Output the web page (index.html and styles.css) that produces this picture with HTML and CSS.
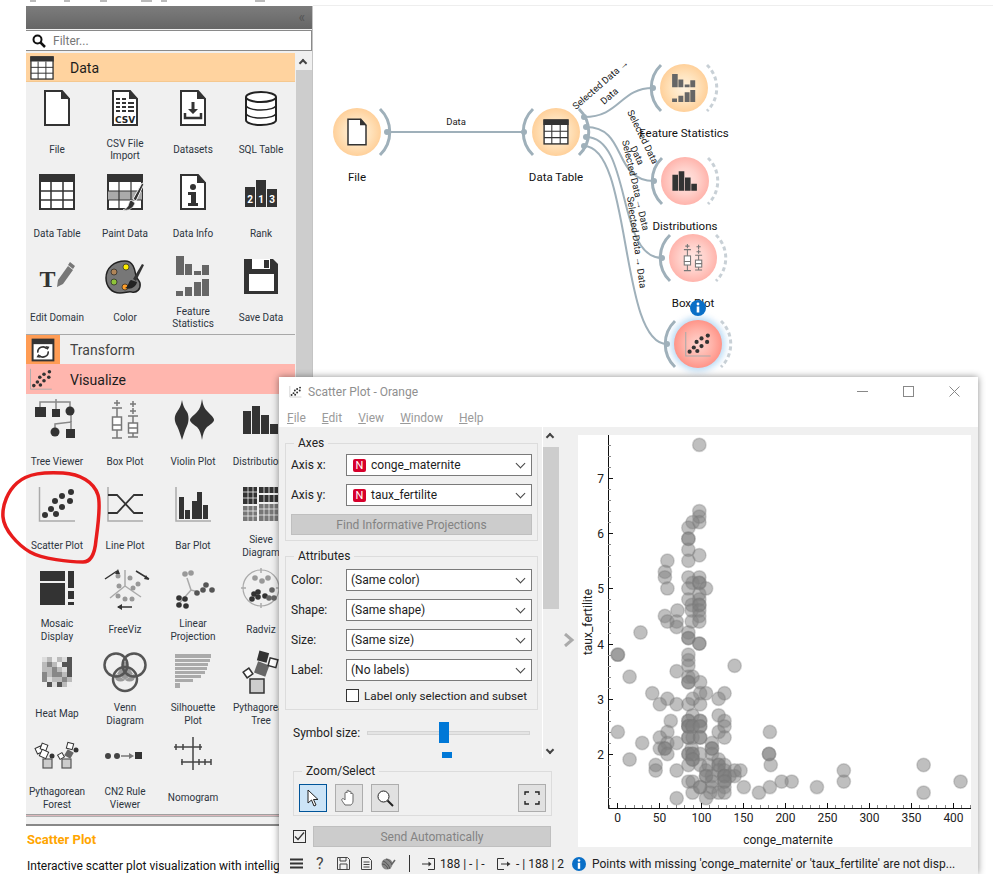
FILE: index.html
```html
<!DOCTYPE html>
<html lang="en">
<head>
    <meta charset="UTF-8">
    <title>Scatter Plot - Orange</title>
    <link rel="stylesheet" href="styles.css">
</head>
<body>

    <!-- Icon library -->
    <svg class="defs" width="0" height="0">
        <defs>
            <symbol id="i-file" viewBox="0 0 40 40" overflow="visible"><path d="M8 3h17l7 8v26H8z" fill="#fff" stroke="#333" stroke-width="2"/><path d="M24 2l9 9h-9z" fill="#333"/></symbol>
            <symbol id="i-csv" viewBox="0 0 40 40" overflow="visible"><path d="M8 3h17l7 8v26H8z" fill="#fff" stroke="#333" stroke-width="2"/><path d="M24 2l9 9h-9z" fill="#333"/><path d="M11 10h4v2h-4zM17 10h4v2h-4zM11 14h4v2h-4zM17 14h4v2h-4zM23 14h6v2h-6zM11 18h4v2h-4zM17 18h4v2h-4zM23 18h6v2h-6zM11 22h4v2h-4zM17 22h4v2h-4zM23 22h6v2h-6z" fill="#333"/><text x="20" y="35" class="ico-csv">CSV</text></symbol>
            <symbol id="i-datasets" viewBox="0 0 40 40" overflow="visible"><path d="M8 3h17l7 8v26H8z" fill="#fff" stroke="#333" stroke-width="2"/><path d="M24 2l9 9h-9z" fill="#333"/><path d="M18.500 14h3v7h3.500l-5 5-5-5h3.500z" fill="#333"/><path d="M12 25v5h16v-5" fill="none" stroke="#333" stroke-width="2.500"/></symbol>
            <symbol id="i-sql" viewBox="0 0 40 40" overflow="visible"><path d="M5 9v23c0 3 7 5 15 5s15-2 15-5V9" fill="#fff" stroke="#222" stroke-width="2"/><ellipse cx="20" cy="9" rx="15" ry="5" fill="#fff" stroke="#222" stroke-width="2"/><path d="M5 17c0 3 7 5 15 5s15-2 15-5M5 25c0 3 7 5 15 5s15-2 15-5" fill="none" stroke="#222" stroke-width="1.500"/></symbol>
            <symbol id="i-table" viewBox="0 0 40 40" overflow="visible"><rect x="3" y="3" width="34" height="34" fill="#fff" stroke="#333" stroke-width="2"/><rect x="2" y="2" width="36" height="8" fill="#333"/><path d="M14 10v27M26 10v27M3 19h34M3 28h34" stroke="#333" stroke-width="1.500"/></symbol>
            <symbol id="i-paint" viewBox="0 0 40 40" overflow="visible"><rect x="3" y="3" width="34" height="34" fill="#fff" stroke="#333" stroke-width="2"/><rect x="2" y="2" width="36" height="8" fill="#333"/><rect x="3" y="19" width="34" height="9" fill="#aaa"/><path d="M14 10v27M26 10v27M3 19h34M3 28h34" stroke="#333" stroke-width="1.200"/><path d="M37 11l-9 16 3 2 8-17z" fill="#333" stroke="#f0f0f0"/><path d="M26 28c-2 1-2 4-3 6-1 2-3 3-5 4 5 1 10-1 12-7z" fill="#333" stroke="#f0f0f0" stroke-width=".8"/></symbol>
            <symbol id="i-info" viewBox="0 0 40 40" overflow="visible"><path d="M8 3h17l7 8v26H8z" fill="#fff" stroke="#333" stroke-width="2"/><path d="M24 2l9 9h-9z" fill="#333"/><circle cx="20" cy="15" r="3" fill="#333"/><path d="M15 20h8v11h2v3H15v-3h3v-8h-3z" fill="#333"/></symbol>
            <symbol id="i-rank" viewBox="0 0 40 40" overflow="visible"><path d="M4 15h10v20H4zM15 8h10v27H15zM26 17h10v18H26z" fill="#333"/><text x="9" y="31" class="ico-rank">2</text><text x="20" y="31" class="ico-rank">1</text><text x="31" y="31" class="ico-rank">3</text></symbol>
            <symbol id="i-edit" viewBox="0 0 40 40" overflow="visible"><text x="10.500" y="31" class="ico-t">T</text><path d="M31 10l5 4-10 14-6 3 1-7z" fill="#777"/><path d="M33 6l5 4-2 3-5-4z" fill="#777"/></symbol>
            <symbol id="i-palette" viewBox="0 0 40 40" overflow="visible"><path d="M20 5C9 5 1 12 1 22c0 9 6 15 14 15 6 0 8-2 12-1 5 1 9-3 8-9-1-3-3-4-4-7-1-5-2-15-11-15z" fill="#777" stroke="#222" stroke-width="1.500"/><circle cx="21" cy="11" r="3" fill="#ffee00" stroke="#222" stroke-width=".7"/><circle cx="9" cy="16" r="3" fill="#b08558" stroke="#222" stroke-width=".7"/><circle cx="9" cy="26" r="3" fill="#8fc43a" stroke="#222" stroke-width=".7"/><circle cx="20" cy="31" r="3" fill="#ff9f2a" stroke="#222" stroke-width=".7"/><path d="M37 8l-9 15 3 2 8-16z" fill="#333"/><path d="M26 24c-3 2-2 6-6 8 6 2 11-1 12-6z" fill="#222"/></symbol>
            <symbol id="i-fstats" viewBox="0 0 40 40" overflow="visible"><path d="M3 0h8v19H3zM12 8h7v11h-7zM21 15h7v4h-7zM29 9h7v10h-7zM3 35h7v5H3zM12 31h7v9h-7zM21 26h7v14h-7zM29 23h7v17h-7z" fill="#666"/></symbol>
            <symbol id="i-save" viewBox="0 0 40 40" overflow="visible"><path d="M3 3h29l5 5v30H3z" fill="#333"/><rect x="11" y="3" width="18" height="10" fill="#fff"/><rect x="23" y="4" width="5" height="8" fill="#333"/><rect x="8" y="18" width="25" height="17" fill="#fff"/></symbol>
            <symbol id="i-tree" viewBox="0 0 40 40" overflow="visible"><path d="M3 9V2h30v9M19-1v10M18 31v-7l16-2v8M34 11v11" fill="none" stroke="#888" stroke-width="1.500"/><path d="M-2 7h11v10H-2zM15 9h8v8h-8zM29 29h9v9h-9z" fill="#333"/><circle cx="33" cy="11" r="4.500" fill="#333"/><circle cx="18" cy="32" r="4.500" fill="#333"/></symbol>
            <symbol id="i-box" viewBox="0 0 40 40" overflow="visible"><g fill="none" stroke="#777" stroke-width="1.500"><path d="M12 0v6M9 3h6M7 8h10M12 8v9M7 38h10M12 30v8M28 1v6M25 4h6M28 8v6M25 11h6M23 16h10M28 16v7M23 37h10M28 33v4"/><rect x="7.500" y="17" width="9" height="13" fill="#fff"/><rect x="23.500" y="23" width="9" height="10" fill="#fff"/><path d="M7 25h10M23 28h10"/></g></symbol>
            <symbol id="i-violin" viewBox="0 0 40 40" overflow="visible"><path d="M9 0c1 6 3 9 5 12 2 3 2 10 0 14-2 4-3 8-5 14-2-6-3-10-5-14-3-5-3-10 0-14 2-3 4-6 5-12z" fill="#333"/><path d="M29-1c1 6 2 9 6 13 4 4 6 6 6 8s-3 4-7 7c-3 3-4 7-5 13-1-6-2-10-5-13-4-3-7-5-7-7s3-4 7-8c3-3 4-7 5-13z" fill="#333"/></symbol>
            <symbol id="i-dist" viewBox="0 0 40 40" overflow="visible"><path d="M2 11h8v23H2zM11 6h8v28h-8zM20 15h8v19h-8zM29 24h8v10h-8z" fill="#333"/></symbol>
            <symbol id="i-scatter" viewBox="0 0 40 40" overflow="visible"><path d="M2.500 3v34H38" fill="none" stroke="#aaa" stroke-width="1.500"/><g fill="#333"><circle cx="34" cy="8" r="3"/><circle cx="25" cy="12" r="3"/><circle cx="33" cy="17" r="3"/><circle cx="18" cy="17" r="3"/><circle cx="25" cy="23" r="3"/><circle cx="14" cy="25" r="3"/><circle cx="8" cy="31" r="3"/><circle cx="19" cy="30" r="3"/></g></symbol>
            <symbol id="i-line" viewBox="0 0 40 40" overflow="visible"><path d="M3 3v34h35" fill="none" stroke="#aaa" stroke-width="1.500"/><path d="M3 11h9l17 18h9M3 29h9l17-18h9" fill="none" stroke="#333" stroke-width="1.800"/></symbol>
            <symbol id="i-bar" viewBox="0 0 40 40" overflow="visible"><path d="M3 3v34h35" fill="none" stroke="#aaa" stroke-width="1.500"/><path d="M6 13h5v22H6zM12 26h5v9h-5zM19 17h5v18h-5zM24 8h5v27h-5zM30 21h5v14h-5z" fill="#333"/></symbol>
            <symbol id="i-sieve" viewBox="0 0 40 40" overflow="visible"><path d="M2 3h14v17H2zM18 3h19v6H18zM18 11h19v7H18z" fill="#333"/><path d="M2 22h14v15H2zM18 20h19v17H18z" fill="#777"/><path d="M7 3v34M12 3v34M2 8h14M2 14h14M2 27h14M2 32h14M23 3v34M28 3v34M33 3v34M18 25h19M18 31h19" stroke="#f0f0f0" stroke-width=".8"/></symbol>
            <symbol id="i-mosaic" viewBox="0 0 40 40" overflow="visible"><path d="M3 3h25v10H3zM3 15h25v22H3zM31 3h6v17h-6zM31 23h6v8h-6zM31 34h6v3h-6z" fill="#333"/></symbol>
            <symbol id="i-freeviz" viewBox="0 0 40 40" overflow="visible"><path d="M20 18v-16M20 18L5 30M20 18l16 11" stroke="#aaa" stroke-width="1.500" fill="none"/><g fill="#999"><circle cx="13" cy="8" r="2.500"/><circle cx="25" cy="10" r="2.500"/><circle cx="14" cy="18" r="2.500"/><circle cx="28" cy="20" r="2.500"/><circle cx="33" cy="16" r="2.500"/><circle cx="20" cy="31" r="2.500"/><circle cx="13" cy="28" r="2.500"/><circle cx="27" cy="31" r="2.500"/></g><path d="M0 11L12 3M31 3l13 8M13 39h14" stroke="#333" stroke-width="1.500" fill="none"/><path d="M13 1l-3 5 5 0zM44 12l-5-1 2-4zM12 39l5-3v6z" fill="#333"/></symbol>
            <symbol id="i-linear" viewBox="0 0 40 40" overflow="visible"><path d="M4 38l14-16 8 2M18 22l-4-12" stroke="#aaa" stroke-width="1.500" fill="none"/><g fill="#999"><circle cx="12" cy="6" r="2.800"/><circle cx="18" cy="5" r="2.800"/></g><g fill="#555"><circle cx="24" cy="25" r="2.800"/><circle cx="30" cy="22" r="2.800"/><circle cx="33" cy="17" r="2.800"/><circle cx="39" cy="22" r="2.800"/></g><g fill="#333"><circle cx="6" cy="30" r="2.800"/><circle cx="12" cy="31" r="2.800"/><circle cx="6" cy="37" r="2.800"/><circle cx="13" cy="38" r="2.800"/></g></symbol>
            <symbol id="i-radviz" viewBox="0 0 40 40" overflow="visible"><circle cx="20" cy="20" r="18" fill="none" stroke="#aaa" stroke-width="1.200"/><path d="M20 0v5M20 35v5M0 20h5M35 20h5" stroke="#aaa" stroke-width="1.500"/><g fill="#999"><circle cx="14" cy="10" r="2.800"/><circle cx="21" cy="13" r="2.800"/><circle cx="27" cy="10" r="2.800"/></g><g fill="#333"><circle cx="13" cy="26" r="2.800"/><circle cx="17" cy="24" r="2.800"/><circle cx="11" cy="31" r="2.800"/><circle cx="17" cy="29" r="2.800"/><circle cx="24" cy="28" r="2.800"/></g><g fill="#666"><circle cx="31" cy="22" r="2.800"/><circle cx="28" cy="30" r="2.800"/><circle cx="33" cy="30" r="2.800"/></g></symbol>
            <symbol id="i-heat" viewBox="0 0 40 40" overflow="visible"><path d="M5 5h30v30H5z" fill="#bbb"/><path d="M5 5h5v5H5zM25 15h5v5h-5zM10 25h5v5h-5zM15 30h5v5h-5zM25 5h5v5h-5z" fill="#ddd"/><path d="M15 15h5v10h-5zM10 10h5v5h-5zM20 20h5v5h-5zM5 20h5v10H5zM25 25h5v5h-5z" fill="#888"/><path d="M25 10h10v5H25zM30 5h5v5h-5zM10 30h5v5h-5zM20 30h5v5h-5zM30 15h5v10h-5z" fill="#555"/><path d="M5 30h5v5H5zM15 5h5v5h-5zM30 30h5v5h-5zM20 10h5v5h-5z" fill="#eee"/></symbol>
            <symbol id="i-venn" viewBox="0 0 40 40" overflow="visible"><path d="M20 9l8 13-8 6-8-6z" fill="#999"/><path d="M20 28l9-6c2 1 1 4 0 6-3 2-6 2-9 0zM20 28l-9-6c-2 1-1 4 0 6 3 2 6 2 9 0z" fill="#999"/><g fill="none" stroke="#555" stroke-width="2.500"><circle cx="11" cy="13" r="11.500"/><circle cx="29" cy="13" r="11.500"/><circle cx="20" cy="27" r="12"/></g></symbol>
            <symbol id="i-silhouette" viewBox="0 0 40 40" overflow="visible"><path d="M2 2h36v4H2zM2 7h35v3H2zM2 11h33v3H2zM2 15h32v3H2zM2 19h30v3H2zM2 23h26v3H2zM2 27h18v3H2zM2 31h5v5H2z" fill="#aaa"/></symbol>
            <symbol id="i-pythtree" viewBox="0 0 40 40" overflow="visible"><rect x="9" y="27" width="14" height="14" fill="#ccc" stroke="#333" stroke-width="1.500"/><rect x="-6" y="-6" width="12" height="12" transform="translate(20.700 17) rotate(20)" fill="#666"/><rect x="-5" y="-5" width="10" height="10" transform="translate(22 4.700) rotate(15)" fill="#333"/><rect x="-4" y="-4" width="8" height="8" transform="translate(32 10.700) rotate(15)" fill="#fff" stroke="#333" stroke-width="1.500"/><rect x="-3.500" y="-3.500" width="7" height="7" transform="translate(7 21) rotate(-35)" fill="#fff" stroke="#333" stroke-width="1.500"/></symbol>
            <symbol id="i-forest" viewBox="0 0 40 40" overflow="visible"><g fill="#ccc" stroke="#555" stroke-width="1.200"><rect x="6" y="23" width="9" height="9"/><rect x="25" y="23" width="9" height="9"/></g><g fill="#fff" stroke="#333"><rect x="-3" y="-3" width="6" height="6" transform="translate(2 14) rotate(-25)"/><rect x="-3" y="-3" width="6" height="6" transform="translate(7 11) rotate(20)"/><rect x="-3.500" y="-3.500" width="7" height="7" transform="translate(7 18) rotate(25)"/><rect x="-2.500" y="-2.500" width="5" height="5" transform="translate(24 20) rotate(-30)"/><rect x="-3" y="-3" width="6" height="6" transform="translate(33 10) rotate(15)"/></g><rect x="-3.500" y="-3.500" width="7" height="7" transform="translate(32 18) rotate(30)" fill="#666"/><circle cx="15" cy="20" r="2.500" fill="#333"/><circle cx="39" cy="14" r="2.500" fill="#333"/></symbol>
            <symbol id="i-cn2" viewBox="0 0 40 40" overflow="visible"><circle cx="3" cy="20" r="3" fill="#444"/><circle cx="12" cy="20" r="3" fill="#444"/><path d="M16 20h9" stroke="#777" stroke-width="1.500"/><path d="M24 17l5 3-5 3z" fill="#777"/><rect x="30" y="16" width="7" height="7" fill="#333"/></symbol>
            <symbol id="i-nomogram" viewBox="0 0 40 40" overflow="visible"><path d="M20 1v33M1 11h28M8 26h30M3 8v6M10 8v6M20 8v6M27 8v6M9 23v6M20 23v6M26 23v6M32 23v6M38 23v6" stroke="#444" stroke-width="1.500" fill="none"/></symbol>
            <symbol id="i-transform" viewBox="0 0 40 40"><rect x="4" y="4" width="32" height="32" fill="#fff" stroke="#333" stroke-width="3"/><rect x="4" y="4" width="32" height="7" fill="#333"/><path d="M12 24a8 8 0 0 1 14-6M28 22a8 8 0 0 1-14 6" fill="none" stroke="#333" stroke-width="2.500"/><path d="M24 14l6 1-3 5zM16 32l-6-1 3-5z" fill="#333"/></symbol>
        </defs>
    </svg>

    <div class="top-strip">
        <span class="frag frag-a"></span><span class="frag frag-b"></span><span class="frag frag-c"></span><span class="frag frag-d"></span><span class="frag frag-e"></span><span class="frag frag-f"></span>
    </div>

    <div class="main">
        <!-- Widget toolbox -->
        <aside class="sidebar">
            <div class="dock-head">&laquo;</div>
            <div class="filter">
                <svg class="filter-ico" width="14" height="14" viewBox="0 0 14 14"><circle cx="5.500" cy="5.500" r="4" fill="none" stroke="#111" stroke-width="2"/><path d="M8.500 8.500L13 13" stroke="#111" stroke-width="2.500"/></svg>
                <span>Filter...</span>
            </div>
            <div class="toolbox">
                <div class="tabs">
                    <div class="tab tab-data">
                        <svg class="tab-ico" width="26" height="26"><use href="#i-table"/></svg>
                        <span>Data</span>
                    </div>
                    <div class="grid">
                        <div class="cell"><svg class="ico"><use href="#i-file"/></svg><p>File</p></div>
                        <div class="cell"><svg class="ico"><use href="#i-csv"/></svg><p>CSV File<br>Import</p></div>
                        <div class="cell"><svg class="ico"><use href="#i-datasets"/></svg><p>Datasets</p></div>
                        <div class="cell"><svg class="ico"><use href="#i-sql"/></svg><p>SQL Table</p></div>
                        <div class="cell"><svg class="ico"><use href="#i-table"/></svg><p>Data Table</p></div>
                        <div class="cell"><svg class="ico"><use href="#i-paint"/></svg><p>Paint Data</p></div>
                        <div class="cell"><svg class="ico"><use href="#i-info"/></svg><p>Data Info</p></div>
                        <div class="cell"><svg class="ico"><use href="#i-rank"/></svg><p>Rank</p></div>
                        <div class="cell"><svg class="ico"><use href="#i-edit"/></svg><p>Edit Domain</p></div>
                        <div class="cell"><svg class="ico"><use href="#i-palette"/></svg><p>Color</p></div>
                        <div class="cell"><svg class="ico"><use href="#i-fstats"/></svg><p>Feature<br>Statistics</p></div>
                        <div class="cell"><svg class="ico"><use href="#i-save"/></svg><p>Save Data</p></div>
                    </div>
                    <div class="tab tab-transform">
                        <span class="tab-swatch"><svg width="26" height="26"><use href="#i-transform"/></svg></span>
                        <span>Transform</span>
                    </div>
                    <div class="tab tab-visualize">
                        <svg class="tab-ico" width="24" height="24"><use href="#i-scatter"/></svg>
                        <span>Visualize</span>
                    </div>
                    <div class="grid grid-vis">
                        <div class="cell"><svg class="ico"><use href="#i-tree"/></svg><p>Tree Viewer</p></div>
                        <div class="cell"><svg class="ico"><use href="#i-box"/></svg><p>Box Plot</p></div>
                        <div class="cell"><svg class="ico"><use href="#i-violin"/></svg><p>Violin Plot</p></div>
                        <div class="cell"><svg class="ico"><use href="#i-dist"/></svg><p>Distributions</p></div>
                        <div class="cell"><svg class="ico"><use href="#i-scatter"/></svg><p>Scatter Plot</p></div>
                        <div class="cell"><svg class="ico"><use href="#i-line"/></svg><p>Line Plot</p></div>
                        <div class="cell"><svg class="ico"><use href="#i-bar"/></svg><p>Bar Plot</p></div>
                        <div class="cell"><svg class="ico"><use href="#i-sieve"/></svg><p>Sieve<br>Diagram</p></div>
                        <div class="cell"><svg class="ico"><use href="#i-mosaic"/></svg><p>Mosaic<br>Display</p></div>
                        <div class="cell"><svg class="ico"><use href="#i-freeviz"/></svg><p>FreeViz</p></div>
                        <div class="cell"><svg class="ico"><use href="#i-linear"/></svg><p>Linear<br>Projection</p></div>
                        <div class="cell"><svg class="ico"><use href="#i-radviz"/></svg><p>Radviz</p></div>
                        <div class="cell"><svg class="ico"><use href="#i-heat"/></svg><p>Heat Map</p></div>
                        <div class="cell"><svg class="ico"><use href="#i-venn"/></svg><p>Venn<br>Diagram</p></div>
                        <div class="cell"><svg class="ico"><use href="#i-silhouette"/></svg><p>Silhouette<br>Plot</p></div>
                        <div class="cell"><svg class="ico"><use href="#i-pythtree"/></svg><p>Pythagorean<br>Tree</p></div>
                        <div class="cell"><svg class="ico"><use href="#i-forest"/></svg><p>Pythagorean<br>Forest</p></div>
                        <div class="cell"><svg class="ico"><use href="#i-cn2"/></svg><p>CN2 Rule<br>Viewer</p></div>
                        <div class="cell"><svg class="ico"><use href="#i-nomogram"/></svg><p>Nomogram</p></div>
                    </div>
                </div>
                <div class="tool-scroll">
                    <span class="chev-up"></span>
                    <div class="tool-thumb"></div>
                </div>
            </div>
            <div class="tool-foot"></div>
            <div class="desc">
                <h3>Scatter Plot</h3>
                <p>Interactive scatter plot visualization with intellig</p>
            </div>
        </aside>

        <!-- Workflow canvas -->
        <svg class="canvas" viewBox="313 6 680 868" width="680" height="868">
            <defs>
                <radialGradient id="g-orange"><stop offset="0" stop-color="#fff3e0"/><stop offset=".55" stop-color="#ffe3bd"/><stop offset="1" stop-color="#ffd09a"/></radialGradient>
                <radialGradient id="g-pink"><stop offset="0" stop-color="#ffe8e4"/><stop offset=".55" stop-color="#ffd0ca"/><stop offset="1" stop-color="#ffb4ac"/></radialGradient>
                <radialGradient id="g-pink-on"><stop offset="0" stop-color="#ffd5cf"/><stop offset=".6" stop-color="#ffb2a8"/><stop offset="1" stop-color="#ff9488"/></radialGradient>
                <filter id="glow" x="-40%" y="-40%" width="180%" height="180%"><feGaussianBlur stdDeviation="3"/></filter>
            </defs>

            <g class="links">
                <path d="M387 132H524"/>
                <path d="M584 117C620 117 620 88 653 88"/>
                <path d="M586 127C628 127 612 181 654 181"/>
                <path d="M586 137C632 137 616 258 662 258"/>
                <path d="M584 146C632 146 619 344 667 344"/>
            </g>

            <g class="link-text">
                <text x="456" y="125" text-anchor="middle">Data</text>
                <text transform="translate(576 110) rotate(-41)">Selected Data →</text>
                <text transform="translate(604 105) rotate(-41)">Data</text>
                <text transform="translate(627 112) rotate(64)">Selected Data</text>
                <text transform="translate(630 148) rotate(64)">Data</text>
                <text transform="translate(622 141) rotate(77)">Selected Data → Data</text>
                <text transform="translate(627 197) rotate(82)">Selected Data → Data</text>
            </g>

            <!-- File -->
            <g transform="translate(357 132)">
                <circle r="24" fill="url(#g-orange)"/>
                <path class="arc-out" d="M23-23A32 32 0 0 1 23 23"/>
                <circle class="dot" cx="30"  r="3"/>
                <svg x="-15" y="-15" width="30" height="30"><use href="#i-file"/></svg>
                <text class="node-name" y="49">File</text>
            </g>
            <!-- Data Table -->
            <g transform="translate(556 132)">
                <circle r="24" fill="url(#g-orange)"/>
                <path class="arc-out" d="M-23-23A32 32 0 0 0-23 23"/>
                <path class="arc-out" d="M23-23A32 32 0 0 1 23 23"/>
                <circle class="dot" cx="-32" r="3"/>
                <circle class="dot" cx="28" cy="-15" r="3"/><circle class="dot" cx="30" cy="-5" r="3"/><circle class="dot" cx="30" cy="5" r="3"/><circle class="dot" cx="28" cy="14" r="3"/>
                <svg x="-14" y="-14" width="28" height="28"><use href="#i-table"/></svg>
                <text class="node-name" y="49">Data Table</text>
            </g>
            <!-- Feature Statistics -->
            <g transform="translate(684 88)">
                <circle r="24" fill="url(#g-orange)"/>
                <path class="arc-out" d="M-23-23A32 32 0 0 0-23 23"/>
                <path class="arc-dash" d="M23-23A32 32 0 0 1 23 23"/>
                <circle class="dot" cx="-31" r="3"/>
                <svg x="-14" y="-14" width="28" height="28"><use href="#i-fstats"/></svg>
                <text class="node-name" y="49">Feature Statistics</text>
            </g>
            <!-- Distributions -->
            <g transform="translate(685 181)">
                <circle r="24" fill="url(#g-pink)"/>
                <path class="arc-out" d="M-23-23A32 32 0 0 0-23 23"/>
                <path class="arc-dash" d="M23-23A32 32 0 0 1 23 23"/>
                <circle class="dot" cx="-31" r="3"/>
                <svg x="-14" y="-14" width="28" height="28"><use href="#i-dist"/></svg>
                <text class="node-name" y="49">Distributions</text>
            </g>
            <!-- Box Plot -->
            <g transform="translate(693 258)">
                <circle r="24" fill="url(#g-pink)"/>
                <path class="arc-out" d="M-23-23A32 32 0 0 0-23 23"/>
                <path class="arc-dash" d="M23-23A32 32 0 0 1 23 23"/>
                <circle class="dot" cx="-31" r="3"/>
                <svg x="-14" y="-14" width="28" height="28"><use href="#i-box"/></svg>
                <text class="node-name" y="49">Box Plot</text>
            </g>
            <!-- Scatter Plot -->
            <g transform="translate(698 344)">
                <circle r="27" fill="#9ccbf0" opacity=".7" filter="url(#glow)"/>
                <circle r="24" fill="url(#g-pink-on)"/>
                <path class="arc-out" d="M-23-23A32 32 0 0 0-23 23"/>
                <path class="arc-dash" d="M23-23A32 32 0 0 1 23 23"/>
                <circle class="dot" cx="-31" r="3"/>
                <svg x="-14" y="-14" width="28" height="28"><use href="#i-scatter"/></svg>
                <circle cy="-36" r="8" fill="#0a6fc7"/>
                <circle cy="-40" r="1.400" fill="#fff"/>
                <path d="M-1.300-37.500h2.600v6h-2.600z" fill="#fff"/>
            </g>
        </svg>
    </div>

    <!-- Hand drawn mark around the Scatter Plot widget -->
    <svg class="mark" width="110" height="100" viewBox="0 465 110 100">
        <path d="M63 473C45 472 28 473 17 483C8 491 2 505 3 517C4 530 18 545 30 552C42 559 70 562 83 562C92 562 95 552 96 540C98 525 101 505 98 495C94 482 80 474 63 473" fill="none" stroke="#e81c1c" stroke-width="3.500" stroke-linecap="round"/>
    </svg>

    <!-- Scatter Plot window -->
    <section class="window">
        <header class="win-title">
            <svg width="13" height="13" viewBox="0 0 40 40"><use href="#i-scatter"/></svg>
            <span class="win-name">Scatter Plot - Orange</span>
            <div class="win-btns">
                <svg width="11" height="11" viewBox="0 0 11 11"><path d="M0 5.500h11" stroke="#888"/></svg>
                <svg width="11" height="11" viewBox="0 0 11 11"><rect x=".5" y=".5" width="10" height="10" fill="none" stroke="#888"/></svg>
                <svg width="11" height="11" viewBox="0 0 11 11"><path d="M.5.5l10 10M10.500.5l-10 10" stroke="#888"/></svg>
            </div>
        </header>
        <nav class="win-menu">
            <span><u>F</u>ile</span><span><u>E</u>dit</span><span><u>V</u>iew</span><span><u>W</u>indow</span><span><u>H</u>elp</span>
        </nav>

        <div class="win-body">
            <div class="left-col">
                <div class="scroll-area">
                    <div class="scroll-inner">
                        <fieldset class="group group-axes">
                            <legend>Axes</legend>
                            <div class="row"><label>Axis x:</label><div class="combo"><span class="tag-n">N</span>conge_maternite</div></div>
                            <div class="row"><label>Axis y:</label><div class="combo"><span class="tag-n">N</span>taux_fertilite</div></div>
                            <button class="btn btn-find">Find Informative Projections</button>
                        </fieldset>
                        <fieldset class="group group-attrs">
                            <legend>Attributes</legend>
                            <div class="row"><label>Color:</label><div class="combo">(Same color)</div></div>
                            <div class="row"><label>Shape:</label><div class="combo">(Same shape)</div></div>
                            <div class="row"><label>Size:</label><div class="combo">(Same size)</div></div>
                            <div class="row"><label>Label:</label><div class="combo">(No labels)</div></div>
                            <div class="check-row"><span class="check"></span>Label only selection and subset</div>
                        </fieldset>
                        <div class="symbol-row">
                            <label>Symbol size:</label>
                            <div class="slider"><span class="handle"></span></div>
                        </div>
                        <div class="next-handle"></div>
                    </div>
                    <div class="scrollbar">
                        <span class="chev-up"></span>
                        <div class="thumb"></div>
                        <span class="chev-down"></span>
                    </div>
                </div>

                <fieldset class="group group-zoom">
                    <legend>Zoom/Select</legend>
                    <div class="tools">
                        <span class="tool tool-on"><svg width="16" height="18" viewBox="0 0 16 18"><path d="M3 1v13l3.500-3 2.500 6 2-1-2.500-5.500H13z" fill="#fff" stroke="#222"/></svg></span>
                        <span class="tool"><svg width="18" height="18" viewBox="0 0 18 18"><path d="M5 16c-2-3-4-5-3-6s2 0 3 1V4c0-1 2-1 2 0V2c0-1 2-1 2 0v1c0-1 2-1 2 0v2c0-1 2-1 2 0v7c0 2-1 3-2 4z" fill="#fff" stroke="#666"/></svg></span>
                        <span class="tool"><svg width="18" height="18" viewBox="0 0 18 18"><circle cx="7.500" cy="7.500" r="5.500" fill="#fff" stroke="#222"/><path d="M11.500 11.500L17 17" stroke="#222" stroke-width="2"/></svg></span>
                        <span class="tool tool-end"><svg width="16" height="14" viewBox="0 0 16 14"><path d="M1 4V1h4M11 1h4v3M15 10v3h-4M5 13H1v-3" fill="none" stroke="#222" stroke-width="1.400"/></svg></span>
                    </div>
                </fieldset>

                <div class="send-row">
                    <span class="check check-on"><svg width="11" height="11" viewBox="0 0 11 11"><path d="M1 5.500l3 3 6-7" fill="none" stroke="#333" stroke-width="1.200"/></svg></span>
                    <button class="btn btn-send">Send Automatically</button>
                </div>
            </div>

            <div class="splitter"><svg width="12" height="14" viewBox="0 0 12 14"><path d="M2 1l7 6-7 6" fill="none" stroke="#aaa" stroke-width="3"/></svg></div>

            <svg id="plot" class="plot" width="393" height="412" viewBox="578 435 393 412"></svg>
        </div>

        <footer class="status">
            <svg class="st st-menu" width="13" height="11" viewBox="0 0 13 11"><path d="M0 1.500h13M0 5.500h13M0 9.500h13" stroke="#333" stroke-width="2"/></svg>
            <span class="st st-help">?</span>
            <svg class="st st-save" width="13" height="13" viewBox="0 0 13 13"><path d="M.5.5h10l2 2v10H.5z" fill="none" stroke="#444"/><path d="M3 .5h6v3.500H3zM3 7h7v5.500H3z" fill="none" stroke="#444"/></svg>
            <svg class="st st-doc" width="11" height="13" viewBox="0 0 11 13"><path d="M.5.5h7l3 3v9H.5z" fill="none" stroke="#444"/><path d="M2.500 5h6M2.500 7.500h6M2.500 10h6" stroke="#444"/></svg>
            <svg class="st st-yarn" width="15" height="12" viewBox="0 0 15 12"><circle cx="6" cy="6" r="5.500" fill="#888"/><path d="M2 3c3 1 6 4 7 8M1 6c3 0 5 2 6 5M5 1c3 1 5 3 6 6" stroke="#555" fill="none"/><path d="M11 6l3-4" stroke="#666" stroke-width="1.500"/></svg>
            <span class="st-sep"></span>
            <svg class="st st-in" width="13" height="12" viewBox="0 0 13 12"><path d="M6 .5h6.500v11H6" fill="none" stroke="#333"/><path d="M0 6h8" stroke="#333"/><path d="M6.500 3.500L9.500 6l-3 2.500z" fill="#333"/></svg>
            <span class="st-num st-num-in">188 | - | -</span>
            <svg class="st st-out" width="14" height="12" viewBox="0 0 14 12"><path d="M7 .5H.5v11H7" fill="none" stroke="#333"/><path d="M4 6h7" stroke="#333"/><path d="M10 3.500L13.500 6 10 8.500z" fill="#333"/></svg>
            <span class="st-num st-num-out">- | 188 | 2</span>
            <svg class="st st-msg-ico" width="14" height="14" viewBox="0 0 14 14"><circle cx="7" cy="7" r="7" fill="#0a6fc7"/><circle cx="7" cy="3.500" r="1.300" fill="#fff"/><path d="M5.800 5.800h2.400v6H5.800z" fill="#fff"/></svg>
            <span class="st-msg">Points with missing 'conge_maternite' or 'taux_fertilite' are not disp...</span>
        </footer>
    </section>

    <script src="plot.js"></script>
</body>
</html>
```

FILE: styles.css
```css
/* General */
html, body {
    margin: 0;
    height: 874px;
    overflow: hidden;
}
body {
    position: relative;
    background: white;
    font-family: Roboto, "Liberation Sans", sans-serif;
    color: #222;
}
.defs {
    position: absolute;
}
.top-strip {
    height: 6px;
    position: relative;
    overflow: hidden;
}
.frag {
    display: inline-block;
    position: absolute;
    top: 0;
    height: 2px;
    background: #bbb;
}
.frag-a { left: 30px; width: 6px; }
.frag-b { left: 64px; width: 6px; }
.frag-c { left: 100px; width: 7px; }
.frag-d { left: 141px; width: 11px; }
.frag-e { left: 161px; width: 6px; }
.frag-f { left: 255px; width: 10px; }
.main {
    display: flex;
    padding-left: 26px;
}

/* Toolbox */
.sidebar {
    width: 287px;
    height: 868px;
    flex: none;
    background: #f0f0f0;
    overflow: hidden;
    border-right: 1px solid #c4c4c4;
    box-sizing: border-box;
}
.dock-head {
    height: 23px;
    background: linear-gradient(#7c7c7c, #666);
    color: #555;
    font-size: 14px;
    line-height: 22px;
    text-align: right;
    padding-right: 7px;
    box-sizing: border-box;
}
.filter {
    height: 21px;
    margin: 1px 0 2px;
    background: white;
    border: 1px solid #8a8a8a;
    border-left: 0;
    box-sizing: border-box;
    display: flex;
    align-items: center;
    font-size: 12px;
    color: #777;
}
.filter-ico {
    margin: 0 7px 0 6px;
}
.toolbox {
    display: flex;
    height: 761px;
}
.tabs {
    width: 269px;
    flex: none;
    overflow: hidden;
}
.tab {
    height: 30px;
    display: flex;
    align-items: center;
    font-size: 14px;
    box-sizing: border-box;
    color: #1c1c1c;
}
.tab > span:last-child {
    margin-left: 15px;
}
.tab-ico {
    margin-left: 3px;
}
.tab-data {
    height: 29px;
    background: #ffd39f;
    box-shadow: inset 0 -1px 0 #f5c88f;
}
.tab-transform {
    background: #f0f0f0;
    border-top: 1px solid #a8a8a8;
    color: #444;
}
.tab-swatch {
    width: 34px;
    height: 29px;
    background: #ff9c54;
    display: flex;
    align-items: center;
    justify-content: center;
}
.tab-transform > span:last-child {
    margin-left: 10px;
}
.tab-visualize {
    background: #ffb6ae;
}
.tab-visualize > span:last-child {
    margin-left: 17px;
    padding-top: 2px;
}
.grid {
    display: grid;
    grid-template-columns: repeat(4, 68px);
    grid-auto-rows: 82px;
    row-gap: 2px;
    margin: 2px 0 0 -3px;
}
.cell {
    display: flex;
    flex-direction: column;
    align-items: center;
    font-size: 10px;
    color: #2d3540;
}
.ico {
    width: 40px;
    height: 40px;
    margin: 4px 0 5px;
    overflow: visible;
    flex: none;
}
.cell p {
    margin: 1px 0 0;
    height: 33px;
    line-height: 12.500px;
    text-align: center;
    white-space: nowrap;
    display: flex;
    align-items: center;
}
.grid-vis .cell p {
    margin-top: 2px;
}
.ico-csv {
    font: bold 9px "DejaVu Sans", sans-serif;
    text-anchor: middle;
    fill: #222;
}
.ico-rank {
    font: bold 10px Roboto, sans-serif;
    text-anchor: middle;
    fill: #fff;
}
.ico-t {
    font: bold 24px "Liberation Serif", serif;
    text-anchor: middle;
    fill: #333;
}
.tool-scroll {
    width: 16px;
    margin-left: 1px;
    display: flex;
    flex-direction: column;
    align-items: center;
}
.tool-thumb {
    width: 16px;
    flex: 1;
    background: #cdcdcd;
}
.chev-up, .chev-down {
    display: block;
    height: 17px;
    width: 16px;
    position: relative;
}
.chev-up::after, .chev-down::after {
    content: "";
    position: absolute;
    left: 4px;
    width: 6px;
    height: 6px;
    border-left: 2px solid #444;
    border-top: 2px solid #444;
    transform: rotate(45deg);
    top: 7px;
    box-sizing: border-box;
}
.chev-down::after {
    transform: rotate(225deg);
    top: 3px;
}
.tool-foot {
    height: 9px;
    border-top: 1px solid #a0a0a0;
    border-bottom: 2px solid #888;
    box-shadow: inset 0 1px 0 #dcb8bc, inset 0 2px 0 #b0b0b0;
}
.desc {
    background: white;
    height: 60px;
    padding: 5px 0 0 1px;
    white-space: nowrap;
}
.desc h3 {
    margin: 0 0 11px;
    font-size: 13px;
    line-height: 17px;
    color: #ffa500;
    font-weight: bold;
}
.desc p {
    margin: 0;
    font-size: 12px;
    line-height: 14px;
    color: #111;
}

/* Canvas */
.canvas {
    display: block;
    flex: none;
    overflow: hidden;
    border-top: 1px solid #eee;
    margin-top: -1px;
}
.links path {
    fill: none;
    stroke: #9fb0ba;
    stroke-width: 2;
}
.link-text text {
    font: 9.500px Roboto, sans-serif;
    fill: #222;
}
.arc-out {
    fill: none;
    stroke: #9fb0ba;
    stroke-width: 3;
}
.arc-dash {
    fill: none;
    stroke: #c8d0d6;
    stroke-width: 3;
    stroke-dasharray: 4 3;
}
.dot {
    fill: #9fb0ba;
}
.node-name {
    font: 11.500px Roboto, sans-serif;
    text-anchor: middle;
    fill: #111;
}
.mark {
    position: absolute;
    left: 0;
    top: 465px;
}

/* Scatter Plot window */
.window {
    position: absolute;
    left: 279px;
    top: 377px;
    width: 699px;
    height: 497px;
    background: #f0f0f0;
    box-shadow: 0 0 7px rgba(0, 0, 0, 0.45);
    display: flex;
    flex-direction: column;
    font-size: 12px;
}
.win-title {
    height: 28px;
    flex: none;
    background: white;
    display: flex;
    align-items: center;
    padding-left: 10px;
    gap: 6px;
    color: #8f8f8f;
}
.win-btns {
    margin-left: auto;
    display: flex;
    gap: 35px;
    padding-right: 18px;
}
.win-name {
    font-size: 12px;
    padding-top: 2px;
}
.win-menu {
    height: 22px;
    flex: none;
    box-sizing: border-box;
    padding: 3px 0 0 8px;
    background: white;
    display: flex;
    align-items: center;
    gap: 16px;
    color: #9a9a9a;
}
.win-body {
    height: 426px;
    flex: none;
    display: flex;
}
.left-col {
    width: 281px;
    flex: none;
}
.scroll-area {
    height: 331px;
    display: flex;
    overflow: hidden;
}
.scroll-inner {
    width: 264px;
    flex: none;
    padding-top: 9px;
    box-sizing: border-box;
    border-right: 1px solid white;
}
.group {
    margin: 0;
    padding: 0 5px;
    border: 1px solid #dcdcdc;
    box-sizing: border-box;
    min-width: 0;
}
.group legend {
    margin-left: 3px;
    padding: 0 4px;
    font-size: 12px;
    line-height: 14px;
    color: #222;
}
.group-axes {
    margin-left: 6px;
    width: 253px;
    height: 105px;
    padding-top: 4px;
}
.group-attrs {
    margin: 8px 0 0 6px;
    width: 253px;
    height: 161px;
    padding-top: 6px;
}
.row {
    height: 22px;
    display: flex;
    align-items: center;
    margin-bottom: 8px;
}
.row label {
    width: 55px;
    flex: none;
}
.combo {
    width: 187px;
    height: 22px;
    box-sizing: border-box;
    border: 1px solid #7a7a7a;
    background: white;
    display: flex;
    align-items: center;
    padding-left: 4px;
    position: relative;
    color: #1d1d1d;
}
.combo::after {
    content: "";
    position: absolute;
    right: 7px;
    top: 5px;
    width: 6px;
    height: 6px;
    border-right: 1px solid #444;
    border-bottom: 1px solid #444;
    transform: rotate(45deg);
}
.tag-n {
    width: 13px;
    height: 13px;
    background: #d7002c;
    color: white;
    border-radius: 2px;
    font-size: 11px;
    line-height: 13px;
    text-align: center;
    margin: 0 5px 0 2px;
}
.btn {
    display: block;
    background: #cccccc;
    border: 1px solid #bfbfbf;
    color: #838383;
    font: 12px Roboto, sans-serif;
    padding: 0;
    box-sizing: border-box;
    height: 21px;
}
.btn-find {
    width: 241px;
    margin-top: 1px;
    padding-top: 1px;
}
.check-row {
    display: flex;
    align-items: center;
    margin: 6px 0 0 55px;
    gap: 5px;
    height: 13px;
    font-size: 11.700px;
}
.check {
    width: 13px;
    height: 13px;
    box-sizing: border-box;
    border: 1px solid #333;
    background: white;
    flex: none;
    display: block;
}
.symbol-row {
    display: flex;
    align-items: center;
    height: 21px;
    margin: 12px 0 0 14px;
}
.symbol-row label {
    width: 74px;
    flex: none;
    color: #222;
}
.slider {
    width: 163px;
    height: 4px;
    background: #e4e4e4;
    border: 1px solid #d4d4d4;
    box-sizing: border-box;
    position: relative;
}
.handle {
    position: absolute;
    left: 71px;
    top: -10px;
    width: 10px;
    height: 21px;
    background: #0078d7;
}
.next-handle {
    width: 10px;
    height: 8px;
    margin: 9px 0 0 163px;
    background: #0078d7;
}
.scrollbar {
    width: 16px;
    flex: none;
    display: flex;
    flex-direction: column;
    background: #f0f0f0;
}
.scrollbar .chev-up {
    height: 20px;
}
.thumb {
    height: 162px;
    background: #cdcdcd;
}
.scrollbar .chev-down {
    margin-top: auto;
    height: 14px;
}
.group-zoom {
    margin: 6px 0 0 14px;
    width: 259px;
    height: 52px;
    padding-top: 6px;
}
.tools {
    display: flex;
    gap: 8px;
}
.tool {
    width: 28px;
    height: 28px;
    box-sizing: border-box;
    border: 1px solid #adadad;
    background: #e1e1e1;
    display: flex;
    align-items: center;
    justify-content: center;
}
.tool-on {
    background: #cce4f7;
    border-color: #005499;
}
.tool-end {
    margin-left: auto;
}
.send-row {
    display: flex;
    align-items: center;
    gap: 7px;
    margin: 10px 0 0 14px;
}
.check-on {
    background: #f0f0f0;
}
.check-on svg {
    display: block;
}
.btn-send {
    width: 238px;
}
.splitter {
    width: 18px;
    flex: none;
    display: flex;
    align-items: center;
    justify-content: center;
}
.plot {
    display: block;
    margin-top: 8px;
    background: white;
    flex: none;
}
.tick-text {
    font: 12px Roboto, sans-serif;
    fill: #222;
}

/* Status bar */
.status {
    height: 21px;
    flex: none;
    display: flex;
    align-items: center;
    padding-left: 11px;
    color: #222;
    white-space: nowrap;
}
.st-help {
    margin-left: 13px;
    font-size: 16px;
    width: 9px;
    color: #444;
}
.st-save { margin-left: 12px; }
.st-doc { margin-left: 11px; }
.st-yarn { margin-left: 9px; }
.st-sep {
    width: 1px;
    height: 17px;
    background: #333;
    margin-left: 13px;
}
.st-in { margin-left: 12px; }
.st-num-in { margin-left: 5px; width: 57px; }
.st-num-out { margin-left: 5px; width: 56px; }
.st-msg { margin-left: 6px; }
```

FILE: plot.js
```js
// conge_maternite / taux_fertilite points, [x, y]
const points = [
    [98,7.6],[98,6.4],[98,6.3],[98,6.2],[90,6.2],[85,6.1],[85,5.9],[85,5.9],[85,5.7],[98,5.6],[85,5.5],[60,5.5],
    [57,5.3],[57,5.2],[60,5.0],[85,5.2],[98,5.2],[90,5.1],[98,5.1],[98,5.1],[85,5.0],[106,5.0],[98,4.9],[85,4.8],
    [98,4.8],[89,4.7],[98,4.7],[98,4.7],[89,4.6],[98,4.6],[72,4.6],[57,4.5],[98,4.5],[60,4.4],[71,4.4],[89,4.4],
    [98,4.4],[71,4.3],[85,4.2],[28,4.2],[85,4.1],[85,4.1],[98,4.0],[98,4.0],[1,3.8],[1,3.8],[85,3.8],[85,3.7],
    [85,3.6],[140,3.6],[71,3.5],[15,3.4],[85,3.4],[90,3.4],[85,3.3],[85,3.3],[99,3.3],[99,3.1],[106,3.1],[128,3.1],
    [42,3.1],[60,3.0],[90,3.0],[121,3.0],[51,2.9],[71,2.9],[85,2.9],[99,2.9],[90,2.7],[121,2.7],[64,2.6],[85,2.6],
    [85,2.6],[99,2.6],[99,2.6],[128,2.6],[85,2.5],[85,2.5],[85,2.5],[90,2.5],[90,2.5],[99,2.5],[99,2.5],[128,2.5],
    [1,2.4],[60,2.4],[121,2.4],[182,2.4],[51,2.3],[85,2.3],[85,2.3],[90,2.3],[99,2.3],[99,2.3],[128,2.3],[30,2.2],
    [60,2.2],[71,2.2],[113,2.2],[51,2.1],[57,2.1],[57,2.1],[113,2.1],[113,2.1],[89,2.1],[60,2.0],[85,2.0],[85,2.0],
    [90,2.0],[90,2.0],[99,2.0],[113,2.0],[181,2.0],[181,2.0],[15,1.9],[90,1.9],[90,1.9],[121,1.9],[46,1.8],[85,1.8],
    [99,1.8],[109,1.8],[121,1.8],[121,1.8],[128,1.8],[183,1.8],[365,1.8],[46,1.7],[71,1.7],[106,1.7],[121,1.7],[128,1.7],
    [140,1.7],[147,1.7],[270,1.7],[106,1.6],[106,1.6],[113,1.6],[128,1.6],[128,1.6],[128,1.6],[134,1.6],[140,1.6],[85,1.5],
    [90,1.5],[113,1.5],[128,1.5],[128,1.5],[196,1.5],[208,1.5],[270,1.5],[409,1.5],[99,1.4],[99,1.4],[113,1.4],[128,1.4],
    [151,1.4],[182,1.4],[238,1.4],[90,1.3],[111,1.3],[121,1.3],[128,1.3],[169,1.3],[365,1.3],[71,1.2],[106,1.2]
];

const plot = document.getElementById("plot");
const left = 608, right = 971, top_ = 435, bottom = 808;
const px = v => 617 + v * 0.84;
const py = v => 754 - (v - 2) * 55.2;

function add(tag, attrs, text) {
    const el = document.createElementNS("http://www.w3.org/2000/svg", tag);
    for (const k in attrs) el.setAttribute(k, attrs[k]);
    if (text !== undefined) el.textContent = text;
    plot.appendChild(el);
    return el;
}

points.forEach(p => {
    add("circle", { cx: px(p[0]), cy: py(p[1]), r: 6.7, fill: "rgba(128,128,128,.5)", stroke: "rgba(120,120,120,.3)", "stroke-width": 1.5 });
});

// axes
add("path", { d: `M${left}.5 ${top_}V${bottom}.5H${right}`, fill: "none", stroke: "#111" });
for (let v = 1.2; v < 7.8; v += 0.2) {
    const major = Math.abs(v - Math.round(v)) < 0.01;
    const y = Math.round(py(v)) + 0.5;
    add("path", { d: `M${left} ${y}h${major ? 5 : 3}`, stroke: major ? "#111" : "#888" });
    if (major) add("text", { x: 604, y: y + 4, "text-anchor": "end", class: "tick-text" }, Math.round(v));
}
for (let v = -10; v <= 420; v += 10) {
    const major = v % 50 === 0;
    const x = Math.round(px(v)) + 0.5;
    add("path", { d: `M${x} ${bottom}v-${major ? 5 : 3}`, stroke: major ? "#111" : "#888" });
    if (major && v >= 0) add("text", { x: x, y: 822, "text-anchor": "middle", class: "tick-text" }, v);
}
add("text", { x: 788, y: 844, "text-anchor": "middle", class: "tick-text" }, "conge_maternite");
add("text", { transform: "translate(592 622) rotate(-90)", "text-anchor": "middle", class: "tick-text" }, "taux_fertilite");
```
